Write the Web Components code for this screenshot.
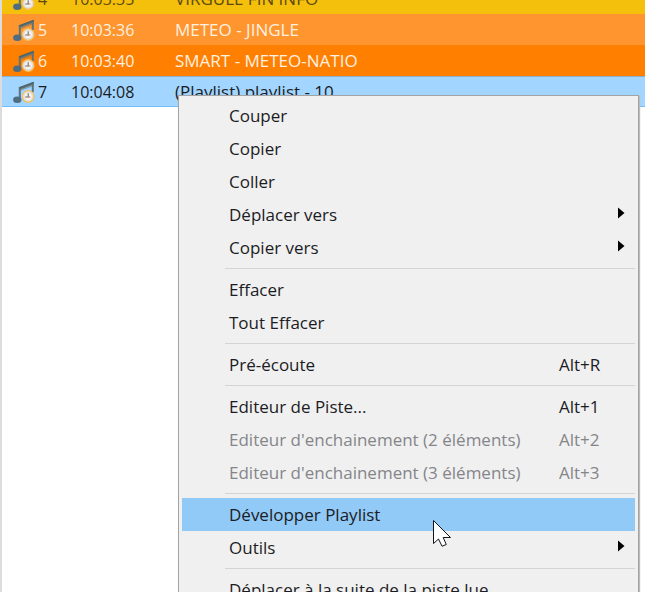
<!DOCTYPE html>
<html lang="fr">
<head>
<meta charset="utf-8">
<title>Playlist</title>
<style>
  html, body { height: 100%; }
  body {
    margin: 0;
    background: #fff;
    color: #1c1c24;
    font: 17px/20px "Open Sans", "Noto Sans", sans-serif;
    overflow: hidden;
  }
</style>
</head>
<body>
<playlist-window></playlist-window>

<script>
class MusicIcon extends HTMLElement {
  constructor() {
    super();
    this.attachShadow({ mode: "open" }).innerHTML = `
      <style>
        :host { display: block; width: 23px; height: 24px; }
        svg { display: block; }
      </style>
      <svg width="23" height="24" viewBox="0 0 23 24" aria-hidden="true">
        <path d="M6.800 19V8.500L19.800 3.500V12" fill="none" stroke="#5f7377" stroke-width="2"/>
        <path d="M6 7.800L20.800 2V6L6 11.500Z" fill="#5f7377" fill-opacity=".5"/>
        <path d="M6 8L20.800 2.400" stroke="#4f656a" stroke-width="1.600"/>
        <ellipse cx="4.300" cy="19.800" rx="4.200" ry="3.200" fill="#4f6d80"/>
        <circle cx="15.200" cy="16.500" r="5.700" fill="#f6f3ec" stroke="#efc066" stroke-width="1.500"/>
        <circle cx="15.200" cy="16.500" r="4.300" fill="none" stroke="#d9dce2" stroke-width="1"/>
        <path d="M15.200 13.200V17H12.200" fill="none" stroke="#6b6c80" stroke-width="1.100"/>
        <path d="M15.200 17H17.500" stroke="#c77b69" stroke-width="1"/>
      </svg>`;
  }
}
customElements.define("music-icon", MusicIcon);

class PlaylistTable extends HTMLElement {
  constructor() {
    super();
    const rows = [
      ["4", "10:03:35", "VIRGULE FIN INFO", "gold"],
      ["5", "10:03:36", "METEO - JINGLE", "light"],
      ["6", "10:03:40", "SMART - METEO-NATIO", "deep"],
      ["7", "10:04:08", "(Playlist) playlist - 10", "selected"]
    ];
    this.attachShadow({ mode: "open" }).innerHTML = `
      <style>
        :host { display: block; }
        table { width: 100%; border-collapse: separate; border-spacing: 0; table-layout: fixed; }
        .number-column { width: 69px; }
        .time-column { width: 104px; }
        td { height: 31px; padding: 0; box-sizing: border-box; white-space: nowrap; vertical-align: middle; }
        .number { display: flex; align-items: center; gap: 2px; padding-left: 11px; }
        .number, .time { font-size: 16px; }
        .gold { background: #f5c00b; color: #5c4a10; }
        .light { background: #ff952e; color: #fff0e0; }
        .deep { background: #ff8000; color: #fff0e0; }
        .selected { background: #a2d5ff; }
        .selected td { border-top: 1px solid #8fb0c2; border-bottom: 1px solid #74bcfa; }
      </style>
      <table aria-label="Playlist">
        <colgroup><col class="number-column"><col class="time-column"><col></colgroup>
        <tbody>${rows.map(([n, time, title, tone]) => `
          <tr class="${tone}">
            <td><div class="number"><music-icon></music-icon><span>${n}</span></div></td>
            <td class="time">${time}</td>
            <td>${title}</td>
          </tr>`).join("")}
        </tbody>
      </table>`;
  }
}
customElements.define("playlist-table", PlaylistTable);

class MenuEntry extends HTMLElement {
  connectedCallback() {
    if (this.shadowRoot) return;
    const shortcut = this.getAttribute("shortcut");
    this.attachShadow({ mode: "open" }).innerHTML = `
      <style>
        :host { display: block; }
        button {
          display: flex; align-items: center; width: 100%; height: 33px;
          margin: 0; padding: 0 10px 0 47px; border: 0; background: none;
          color: inherit; font: inherit; text-align: left; white-space: nowrap;
        }
        .label { flex: 1; }
        .shortcut { width: 66px; }
        button:disabled { color: #858589; }
        :host([active]) button { background: #91c9f7; }
        svg { display: block; margin-bottom: 4px; }
      </style>
      <button type="button" role="menuitem" ${this.hasAttribute("disabled") ? "disabled" : ""}
        ${this.hasAttribute("submenu") ? 'aria-haspopup="menu"' : ""}>
        <span class="label"><slot></slot></span>
        ${shortcut ? `<span class="shortcut">${shortcut}</span>` : ""}
        ${this.hasAttribute("submenu") ? `<svg width="7" height="12" viewBox="0 0 7 12" aria-hidden="true"><path d="M0 .500L6.500 6L0 11.500Z" fill="#000"/></svg>` : ""}
      </button>`;
  }
}
customElements.define("menu-entry", MenuEntry);

class MenuDivider extends HTMLElement {
  constructor() {
    super();
    this.attachShadow({ mode: "open" }).innerHTML = `
      <style>
        :host { display: block; padding: 4px 0 4px 43px; }
        hr { margin: 0; border: 0; height: 1px; background: #d4d4d4; }
      </style>
      <hr>`;
  }
}
customElements.define("menu-divider", MenuDivider);

class ContextMenu extends HTMLElement {
  constructor() {
    super();
    this.attachShadow({ mode: "open" }).innerHTML = `
      <style>
        :host {
          display: block; box-sizing: border-box; padding: 3px;
          border: 1px solid #a3a3a3; background: #f0f0f0;
          box-shadow: 1px 1px 1px #bbb;
        }
      </style>
      <div role="menu"><slot></slot></div>`;
  }
}
customElements.define("context-menu", ContextMenu);

class MousePointer extends HTMLElement {
  constructor() {
    super();
    this.attachShadow({ mode: "open" }).innerHTML = `
      <style>:host { display: block; pointer-events: none; } svg { display: block; }</style>
      <svg width="20" height="28" viewBox="0 0 20 28" aria-hidden="true">
        <path d="M1.500 1.500V24.500L6.500 20L10 27.200L14.300 25.500L11.200 18.500H18.500Z" fill="#fff" stroke="#14141e" stroke-width="1"/>
      </svg>`;
  }
}
customElements.define("mouse-pointer", MousePointer);

class PlaylistWindow extends HTMLElement {
  constructor() {
    super();
    this.attachShadow({ mode: "open" }).innerHTML = `
      <style>
        :host {
          display: block; position: relative; box-sizing: border-box;
          height: 100vh; overflow: hidden; border-left: 2px solid #dcdcdc;
        }
        playlist-table { margin-top: -17px; }
        context-menu { position: absolute; top: 95px; left: 176px; right: 6px; }
        mouse-pointer { position: absolute; top: 519px; left: 430px; }
      </style>
      <playlist-table></playlist-table>
      <context-menu>
        <menu-entry>Couper</menu-entry>
        <menu-entry>Copier</menu-entry>
        <menu-entry>Coller</menu-entry>
        <menu-entry submenu>Déplacer vers</menu-entry>
        <menu-entry submenu>Copier vers</menu-entry>
        <menu-divider></menu-divider>
        <menu-entry>Effacer</menu-entry>
        <menu-entry>Tout Effacer</menu-entry>
        <menu-divider></menu-divider>
        <menu-entry shortcut="Alt+R">Pré-écoute</menu-entry>
        <menu-divider></menu-divider>
        <menu-entry shortcut="Alt+1">Editeur de Piste...</menu-entry>
        <menu-entry shortcut="Alt+2" disabled>Editeur d'enchainement (2 éléments)</menu-entry>
        <menu-entry shortcut="Alt+3" disabled>Editeur d'enchainement (3 éléments)</menu-entry>
        <menu-divider></menu-divider>
        <menu-entry active>Développer Playlist</menu-entry>
        <menu-entry submenu>Outils</menu-entry>
        <menu-divider></menu-divider>
        <menu-entry>Déplacer à la suite de la piste lue</menu-entry>
      </context-menu>
      <mouse-pointer></mouse-pointer>`;
  }
}
customElements.define("playlist-window", PlaylistWindow);
</script>
</body>
</html>
